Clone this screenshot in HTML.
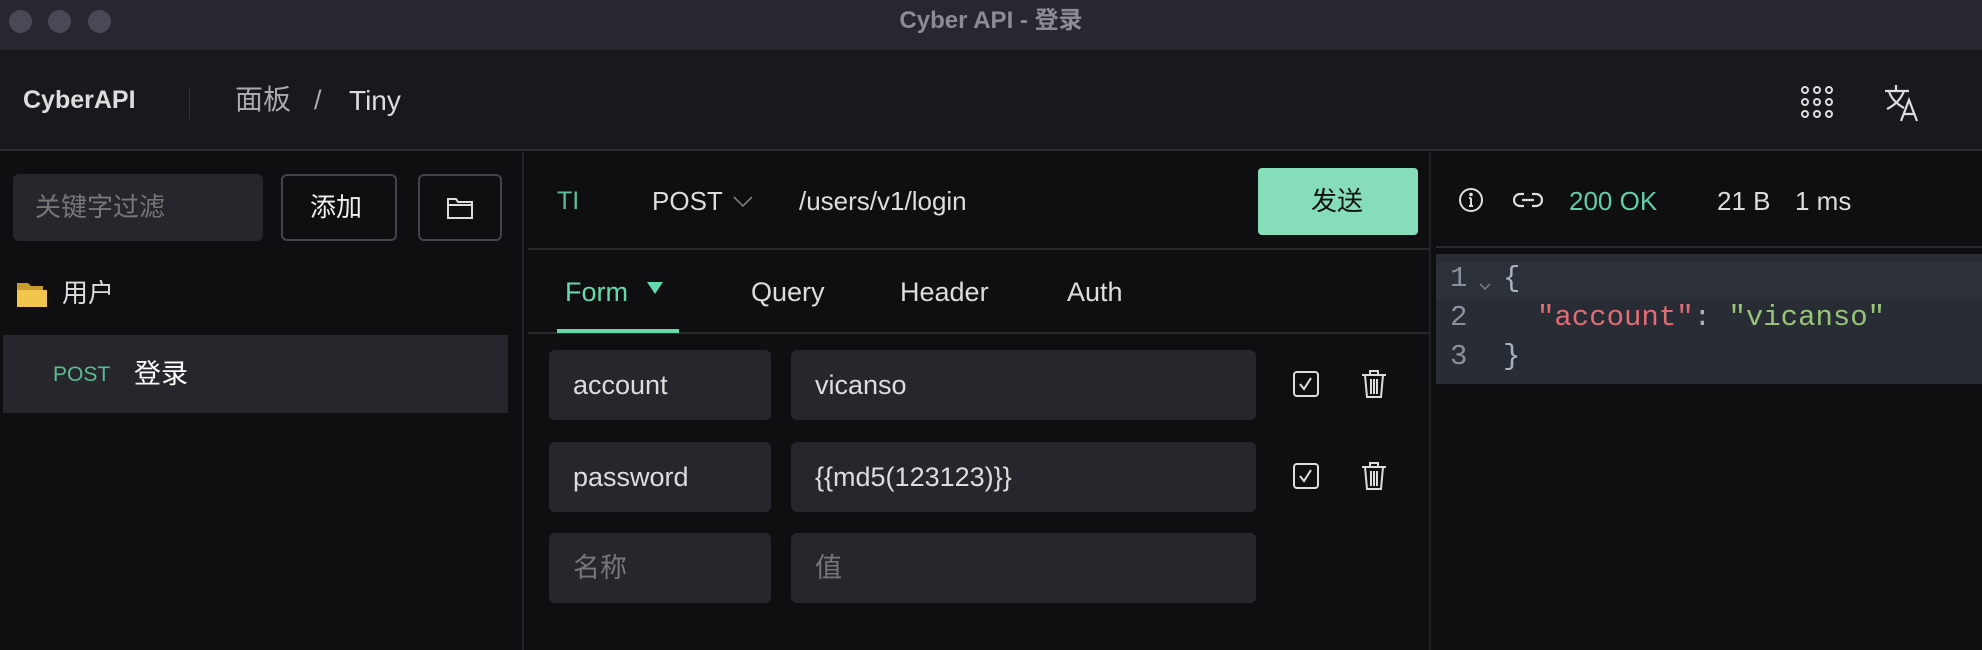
<!DOCTYPE html>
<html><head><meta charset="utf-8"><style>
*{margin:0;padding:0;box-sizing:border-box}
body{width:1982px;height:650px;background:#0f0f12;font-family:"Liberation Sans","Noto Sans CJK SC",sans-serif;color:#e6e6e6;position:relative;overflow:hidden}
.a{position:absolute}
.t{white-space:nowrap;line-height:1}
.tb{left:0;top:0;width:1982px;height:50px;background:#28262f}
.dot{width:23px;height:23px;border-radius:50%;background:#4a4855;top:10px}
.hd{left:0;top:50px;width:1982px;height:101px;background:#19181d;border-bottom:2px solid #2e2d33}
.in{background:#27262c;border-radius:6px}
.btn{border:2px solid #444349;border-radius:6px}
.m{font-family:"Liberation Mono","DejaVu Sans Mono",monospace;font-size:29px}
</style></head><body>
<div class="a tb"></div>
<div class="a dot" style="left:9px"></div><div class="a dot" style="left:48px"></div><div class="a dot" style="left:88px"></div>
<div class="a t" style="left:0;width:1982px;text-align:center;top:9px;font-size:24px;font-weight:bold;color:#8c8a92">Cyber API - 登录</div>
<div class="a hd"></div>
<div class="a t" style="left:23px;top:88px;font-size:25px;font-weight:bold;color:#ddd">CyberAPI</div>
<div class="a" style="left:189px;top:88px;width:1px;height:31px;background:#333"></div>
<div class="a t" style="left:235px;top:86px;font-size:28px;color:#aaa">面板</div>
<div class="a t" style="left:314px;top:87px;font-size:27px;color:#aaa">/</div>
<div class="a t" style="left:349px;top:87px;font-size:28px;color:#ddd">Tiny</div>
<svg class="a" style="left:1800px;top:85px" width="36" height="36" viewBox="0 0 36 36" fill="none" stroke="#ddd" stroke-width="2"><circle cx="5" cy="5" r="3"/><circle cx="17" cy="5" r="3"/><circle cx="29" cy="5" r="3"/><circle cx="5" cy="17" r="3"/><circle cx="17" cy="17" r="3"/><circle cx="29" cy="17" r="3"/><circle cx="5" cy="29" r="3"/><circle cx="17" cy="29" r="3"/><circle cx="29" cy="29" r="3"/></svg>
<svg class="a" style="left:1884px;top:84px" width="38" height="38" viewBox="0 0 38 38" fill="none" stroke="#ddd" stroke-width="2.2"><path d="M1 7h24M12 1v6M5 7c2 8 8 13 15 17M20 7c-3 8-9 14-17 18"/><path d="M17 37l8-21 8 21M20 30h10"/></svg>
<div class="a" style="left:522px;top:152px;width:2px;height:498px;background:#222126"></div>
<div class="a in" style="left:13px;top:174px;width:250px;height:67px"></div>
<div class="a t" style="left:35px;top:194px;font-size:26px;color:#777">关键字过滤</div>
<div class="a btn" style="left:281px;top:174px;width:116px;height:67px"></div>
<div class="a t" style="left:310px;top:194px;font-size:26px;color:#eee">添加</div>
<div class="a btn" style="left:418px;top:174px;width:84px;height:67px"></div>
<svg class="a" style="left:446px;top:196px" width="28" height="24" viewBox="0 0 28 24" fill="none" stroke="#ddd" stroke-width="2"><path d="M2 3h8l2 3h14v16H2z M2 9h24"/></svg>
<svg class="a" style="left:17px;top:281px" width="30" height="27" viewBox="0 0 30 27"><path d="M0 2h11l3 3h12v6H0z" fill="#c99a2e"/><path d="M0 9h30v17H0z" fill="#f0c64c"/></svg>
<div class="a t" style="left:62px;top:280px;font-size:26px;color:#ddd">用户</div>
<div class="a" style="left:3px;top:335px;width:505px;height:78px;background:#27262c"></div>
<div class="a t" style="left:53px;top:364px;font-size:21px;color:#58bd95">POST</div>
<div class="a t" style="left:134px;top:361px;font-size:27px;color:#fff">登录</div>
<div class="a" style="left:1429px;top:152px;width:2px;height:498px;background:#222126"></div>
<div class="a t" style="left:557px;top:189px;font-size:25px;color:#5bbf97">TI</div>
<div class="a t" style="left:652px;top:188px;font-size:26px;color:#ddd">POST</div>
<svg class="a" style="left:733px;top:196px" width="20" height="12" viewBox="0 0 20 12" fill="none" stroke="#888" stroke-width="1.5"><path d="M1 1l9 9 9-9"/></svg>
<div class="a t" style="left:799px;top:188px;font-size:26px;color:#ddd">/users/v1/login</div>
<div class="a" style="left:1258px;top:168px;width:160px;height:67px;background:#85ddb9;border-radius:4px"></div>
<div class="a t" style="left:1311px;top:188px;font-size:26px;color:#111">发送</div>
<div class="a" style="left:528px;top:248px;width:901px;height:2px;background:#2a292e"></div>
<div class="a t" style="left:565px;top:279px;font-size:27px;color:#66d9ac">Form</div>
<svg class="a" style="left:647px;top:282px" width="16" height="12"><path d="M0 0h16L8 12z" fill="#66d9ac"/></svg>
<div class="a t" style="left:751px;top:279px;font-size:27px;color:#ddd">Query</div>
<div class="a t" style="left:900px;top:279px;font-size:27px;color:#ddd">Header</div>
<div class="a t" style="left:1067px;top:279px;font-size:27px;color:#ddd">Auth</div>
<div class="a" style="left:528px;top:332px;width:901px;height:2px;background:#2a292e"></div>
<div class="a" style="left:557px;top:329px;width:122px;height:4px;background:#66d9ac"></div>
<div class="a in" style="left:549px;top:350px;width:222px;height:70px"></div>
<div class="a in" style="left:791px;top:350px;width:465px;height:70px"></div>
<div class="a in" style="left:549px;top:442px;width:222px;height:70px"></div>
<div class="a in" style="left:791px;top:442px;width:465px;height:70px"></div>
<div class="a in" style="left:549px;top:533px;width:222px;height:70px"></div>
<div class="a in" style="left:791px;top:533px;width:465px;height:70px"></div>
<div class="a t" style="left:573px;top:372px;font-size:27px;color:#ddd">account</div>
<div class="a t" style="left:815px;top:372px;font-size:27px;color:#ddd">vicanso</div>
<div class="a t" style="left:573px;top:464px;font-size:27px;color:#ddd">password</div>
<div class="a t" style="left:815px;top:464px;font-size:27px;color:#ddd">{{md5(123123)}}</div>
<div class="a t" style="left:573px;top:555px;font-size:27px;color:#777">名称</div>
<div class="a t" style="left:815px;top:555px;font-size:27px;color:#777">值</div>
<svg class="a" style="left:1292px;top:370px" width="28" height="28" viewBox="0 0 28 28" fill="none" stroke="#ddd" stroke-width="2"><rect x="2" y="2" width="24" height="24" rx="3"/><path d="M8 14l4 5 7-11"/></svg>
<svg class="a" style="left:1292px;top:462px" width="28" height="28" viewBox="0 0 28 28" fill="none" stroke="#ddd" stroke-width="2"><rect x="2" y="2" width="24" height="24" rx="3"/><path d="M8 14l4 5 7-11"/></svg>
<svg class="a" style="left:1361px;top:369px" width="26" height="30" viewBox="0 0 26 30" fill="none" stroke="#ddd" stroke-width="2"><path d="M1 6h24M9 6V2h8v4M4 6l2 22h14l2-22M10 10v15M13 10v15M16 10v15"/></svg>
<svg class="a" style="left:1361px;top:461px" width="26" height="30" viewBox="0 0 26 30" fill="none" stroke="#ddd" stroke-width="2"><path d="M1 6h24M9 6V2h8v4M4 6l2 22h14l2-22M10 10v15M13 10v15M16 10v15"/></svg>
<svg class="a" style="left:1458px;top:187px" width="26" height="26" viewBox="0 0 26 26" fill="none" stroke="#ddd" stroke-width="2"><circle cx="13" cy="13" r="11"/><path d="M13 11v8M11 11h2M11 19h4"/><circle cx="13" cy="7.5" r="0.8" fill="#ddd"/></svg>
<svg class="a" style="left:1513px;top:191px" width="30" height="18" viewBox="0 0 30 18" fill="none" stroke="#ddd" stroke-width="2.2"><path d="M11 3H7a6 6 0 000 12h4M19 3h4a6 6 0 010 12h-4M9 9h12"/></svg>
<div class="a t" style="left:1569px;top:188px;font-size:26px;color:#5fd0a3">200 OK</div>
<div class="a t" style="left:1717px;top:188px;font-size:26px;color:#ddd">21 B</div>
<div class="a t" style="left:1795px;top:188px;font-size:26px;color:#ddd">1 ms</div>
<div class="a" style="left:1436px;top:246px;width:546px;height:2px;background:#2a292e"></div>
<div class="a" style="left:1436px;top:254px;width:546px;height:130px;background:#282c34"></div>
<div class="a" style="left:1436px;top:262px;width:546px;height:38px;background:#2c313a"></div>
<div class="a t m" style="left:1450px;top:264px;color:#8a909c">1</div>
<svg class="a" style="left:1479px;top:283px" width="12" height="8" viewBox="0 0 12 8" fill="none" stroke="#7a808c" stroke-width="1.5"><path d="M1 1l5 5 5-5"/></svg>
<div class="a t m" style="left:1503px;top:264px;color:#abb2bf">{</div>
<div class="a t m" style="left:1450px;top:303px;color:#8a909c">2</div>
<div class="a t m" style="left:1537px;top:303px"><span style="color:#e06c75">"account"</span><span style="color:#abb2bf">: </span><span style="color:#98c379">"vicanso"</span></div>
<div class="a t m" style="left:1450px;top:342px;color:#8a909c">3</div>
<div class="a t m" style="left:1503px;top:342px;color:#abb2bf">}</div>
</body></html>
